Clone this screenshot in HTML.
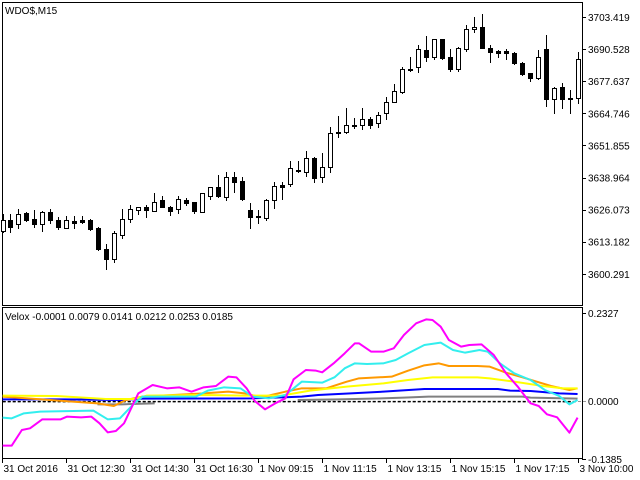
<!DOCTYPE html>
<html><head><meta charset="utf-8"><style>
html,body{margin:0;padding:0;background:#fff;width:640px;height:480px;overflow:hidden}
svg{display:block}
text{font-family:"Liberation Sans",sans-serif;font-size:10px;fill:#000}
</style></head><body>
<svg id="s" width="640" height="480" xmlns="http://www.w3.org/2000/svg" shape-rendering="crispEdges">
<rect x="2.5" y="2.5" width="580" height="303" fill="none" stroke="#000"/>
<rect x="2.5" y="307.5" width="580" height="151" fill="none" stroke="#000"/>
<text x="5" y="14">WDO$,M15</text>
<text x="5" y="320">Velox -0.0001 0.0079 0.0141 0.0212 0.0253 0.0185</text>
<g id="c"></g>
<g id="ax"></g>
<line x1="3" y1="401.5" x2="586" y2="401.5" stroke="#999" stroke-dasharray="3,2"/>
<g transform="translate(-0.6,300) scale(0.4086,0.33333)" fill="none" stroke-linejoin="round" shape-rendering="auto">
<polyline vector-effect="non-scaling-stroke" stroke-width="2" stroke="#808080" points="240,313 300,313 380,310"/>
<polyline vector-effect="non-scaling-stroke" stroke-width="2" stroke="#808080" points="730,300 830,298 910,296 990,293 1050,290 1280,290 1300,293 1415,296"/>
<polyline vector-effect="non-scaling-stroke" stroke-width="1.5" stroke="#000" stroke-dasharray="3,2" points="8,305 1415,305"/>
<polyline vector-effect="non-scaling-stroke" stroke-width="2" stroke="#0000ff" points="8,298 160,298 300,300 350,296 620,295 690,292 740,290 780,285 860,280 940,275 1040,267 1220,267 1250,272 1300,273 1370,280 1415,282"/>
<polyline vector-effect="non-scaling-stroke" stroke-width="2" stroke="#ff9900" points="8,290 240,310 280,318 310,300 350,290 500,280 560,275 600,280 640,292 700,275 740,265 800,265 850,245 880,235 960,230 1000,212 1040,196 1075,190 1100,198 1170,198 1200,200 1240,218 1280,232 1350,258 1395,270 1415,265"/>
<polyline vector-effect="non-scaling-stroke" stroke-width="2" stroke="#ffff00" points="8,287 140,288 260,297 330,297 360,287 500,285 600,287 690,287 760,272 850,260 940,250 1000,240 1060,232 1100,232 1170,232 1200,235 1260,245 1330,258 1380,265 1415,265"/>
<polyline vector-effect="non-scaling-stroke" stroke-width="2" stroke="#33eeee" points="8,353 30,355 60,340 100,335 230,332 265,358 295,355 330,310 350,290 480,290 510,272 550,262 590,265 620,290 660,295 700,285 740,245 790,248 820,232 845,205 870,190 900,192 940,190 970,180 1000,160 1040,135 1080,128 1110,150 1140,158 1175,150 1195,155 1225,190 1260,220 1300,240 1335,270 1370,288 1395,313 1415,300"/>
<polyline vector-effect="non-scaling-stroke" stroke-width="2" stroke="#ff00ff" points="8,437 30,437 55,390 75,385 105,358 150,358 165,350 200,352 225,350 245,370 265,397 285,393 305,370 340,280 375,255 410,265 440,262 470,275 500,262 530,258 560,230 580,232 605,265 625,303 650,328 675,310 700,295 720,238 750,210 775,212 790,217 820,188 845,160 870,130 880,130 910,155 940,155 965,145 990,105 1020,70 1045,58 1060,60 1080,80 1100,120 1130,140 1150,135 1180,133 1210,165 1240,220 1270,262 1300,310 1320,318 1340,343 1365,352 1395,398 1415,353"/>
</g>
</svg>
<script>
var d=[[3,220,231,214,232,1],[10,220,227,214,232,0],[18,214,224,209,228,1],[26,213,220,212,221,0],[34,219,224,210,227,0],[42,212,224,211,231,1],[50,212,220,209,223,0],[58,220,227,217,229,0],[66,220,228,216,228,1],[74,221,223,216,228,0],[82,220,222,216,223,0],[90,220,229,219,230,0],[98,228,249,227,250,0],[106,249,259,244,269,0],[114,233,259,231,262,1],[122,219,235,209,238,1],[130,209,219,205,222,1],[138,207,210,207,214,1],[146,207,210,205,217,0],[154,202,211,193,211,1],[162,200,207,196,207,0],[170,207,211,206,215,0],[178,199,209,196,213,1],[186,200,203,198,205,0],[194,202,211,202,213,0],[202,193,212,193,212,1],[210,187,196,187,199,1],[218,187,196,175,197,0],[226,177,197,172,200,1],[234,177,182,172,192,0],[242,181,199,177,200,0],[250,210,217,203,228,0],[258,216,217,210,223,0],[266,200,218,199,220,1],[274,186,200,182,208,1],[282,185,187,182,199,0],[290,168,184,161,186,1],[298,170,171,161,172,0],[306,158,172,151,176,1],[314,158,178,157,182,0],[322,167,177,153,182,1],[330,133,167,127,172,1],[338,132,133,116,137,0],[346,125,132,108,133,1],[354,125,126,118,128,0],[362,119,125,108,129,1],[370,119,125,117,128,0],[378,115,123,112,127,1],[386,102,113,97,119,1],[394,91,102,84,102,1],[402,69,92,67,93,1],[410,69,70,57,71,0],[418,49,67,45,72,1],[426,50,57,36,61,0],[434,39,57,39,59,1],[442,39,58,39,59,0],[450,57,69,49,71,0],[458,48,69,47,71,1],[466,29,49,25,51,1],[474,27,29,17,32,1],[482,27,48,14,48,0],[490,48,52,45,62,0],[498,51,53,50,57,0],[506,51,53,49,59,0],[514,53,63,52,64,0],[522,63,74,62,75,0],[530,73,78,73,81,0],[538,57,78,50,79,1],[546,49,99,35,106,0],[554,88,99,87,113,1],[562,87,99,83,108,0],[570,98,99,90,113,0],[578,59,98,52,103,1]];
var g=document.getElementById("c"),h="";
d.forEach(function(a){var x=a[0];h+='<line x1="'+(x+.5)+'" y1="'+a[3]+'" x2="'+(x+.5)+'" y2="'+(a[4]+1)+'" stroke="#000"/>';
var bh=Math.max(a[2]-a[1],1);
if(a[5])h+='<rect x="'+(x-1.5)+'" y="'+(a[1]+.5)+'" width="4" height="'+bh+'" fill="#fff" stroke="#000"/>';
else h+='<rect x="'+(x-2)+'" y="'+a[1]+'" width="5" height="'+(bh+1)+'" fill="#000"/>';});
g.innerHTML=h;
var ax="",p=["3703.419","3690.528","3677.637","3664.746","3651.855","3638.964","3626.073","3613.182","3600.291"];
p.forEach(function(t,i){var y=17+i*32.1;ax+='<line x1="582" y1="'+(Math.round(y)+.5)+'" x2="586" y2="'+(Math.round(y)+.5)+'" stroke="#000"/><text x="588" y="'+(y+4)+'">'+t+'</text>';});
[["0.2327",313],["0.0000",401],["-0.1385",459]].forEach(function(a){ax+='<line x1="582" y1="'+(a[1]+.5)+'" x2="586" y2="'+(a[1]+.5)+'" stroke="#000"/><text x="588" y="'+(a[1]+4)+'">'+a[0]+'</text>';});
var tl=["31 Oct 2016","31 Oct 12:30","31 Oct 14:30","31 Oct 16:30","1 Nov 09:15","1 Nov 11:15","1 Nov 13:15","1 Nov 15:15","1 Nov 17:15","3 Nov 10:00"];
tl.forEach(function(t,i){var x=2+64*i+.5;ax+='<line x1="'+x+'" y1="459" x2="'+x+'" y2="463" stroke="#000"/><text x="'+(x+1)+'" y="472">'+t+'</text>';});
document.getElementById("ax").innerHTML=ax;
</script>
</body></html>
